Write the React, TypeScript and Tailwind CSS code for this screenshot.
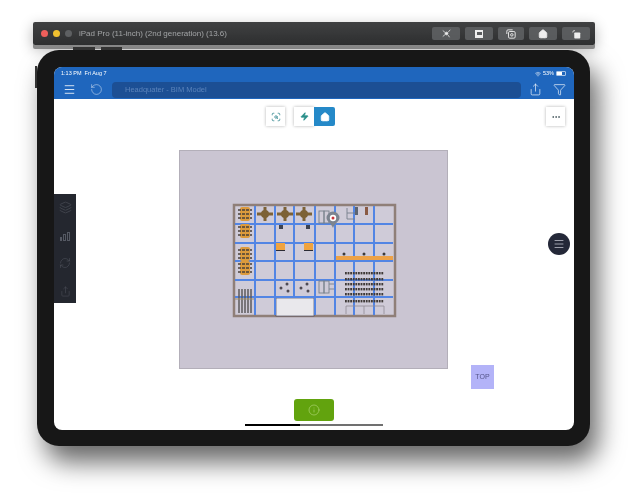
import React from "react";
import {
  Ellipsis,
  Filter,
  Home,
  Info,
  Layers,
  Menu,
  RefreshCw,
  RotateCcw,
  ScanSearch,
  Share,
  Wifi,
  Zap,
} from "lucide-react";

const columns = [255, 275, 294, 315, 335, 354, 374];
const rows = [224, 243, 261, 280, 297];
const stacks = [214, 231, 254, 268];
const fans = [265, 285, 304];
const dotRows = [273, 279, 284, 289, 294, 301];

const dotXs: number[] = [];
for (let x = 346; x <= 384; x += 2.6) dotXs.push(x);

const Shelf = ({ x, y }: { x: number; y: number }) => (
  <g fill="none" stroke="#77808c" strokeWidth="0.9">
    <rect x={x} y={y} width="5" height="12" />
    <rect x={x + 5} y={y} width="5" height="12" />
    <path d={`M${x + 10} ${y + 3}h5M${x + 10} ${y + 8}h5`} />
  </g>
);

const FloorPlan = () => (
  <svg viewBox="180 151 267 217" className="block w-full h-full">
    <rect x="234" y="205" width="161" height="111" fill="#cfcbd8" stroke="#8f7f78" strokeWidth="2.5" />
    <rect x="276" y="298" width="38" height="18" fill="#e9e8ec" stroke="#3c3a52" strokeWidth="0.6" />
    <g stroke="#5285e4" strokeWidth="2">
      {columns.map((x) => (
        <path key={x} d={`M${x} 206V${x > 275 && x < 315 ? 297 : 315}`} />
      ))}
      {rows.map((y) => (
        <path key={y} d={`M235 ${y}H393`} />
      ))}
    </g>
    {stacks.map((y) => (
      <g key={y}>
        <rect x="240" y={y - 7} width="10" height="14" rx="2" fill="#dc9a3c" />
        <path d={`M238 ${y - 4}h14M238 ${y}h14M238 ${y + 4}h14`} stroke="#4a4038" strokeWidth="1.5" strokeDasharray="3 1" />
      </g>
    ))}
    {fans.map((x) => (
      <g key={x} fill="#7d6236">
        <circle cx={x} cy="214" r="4" />
        <path d={`M${x - 8} 212.500h16v3h-16zM${x - 1.500} 207h3v14h-3z`} />
      </g>
    ))}
    <rect x="279" y="225" width="4" height="4" fill="#3d4250" />
    <rect x="306" y="225" width="4" height="4" fill="#3d4250" />
    <rect x="276" y="243" width="9" height="7" fill="#f0a33e" />
    <rect x="304" y="243" width="9" height="7" fill="#f0a33e" />
    <path d="M276 250.500h9M304 250.500h9" stroke="#2b2b35" strokeWidth="1" />
    {[285, 305].map((x) => (
      <g key={x} fill="#4d4852">
        <circle cx={x - 4} cy="288" r="1.500" />
        <circle cx={x + 2} cy="284" r="1.500" />
        <circle cx={x + 3} cy="291" r="1.500" />
      </g>
    ))}
    <g stroke="#5d5a5c" strokeWidth="1.500">
      {[239, 242, 245, 248, 251].map((x) => (
        <path key={x} d={`M${x} 289V313`} />
      ))}
    </g>
    <path d="M235 299H254" stroke="#a08f6f" strokeWidth="1" />
    <Shelf x={319} y={211} />
    <Shelf x={319} y={281} />
    <path d="M347 208v11h8M347 213h8" fill="none" stroke="#77808c" strokeWidth="0.9" />
    <rect x="355" y="207" width="3" height="8" fill="#5d6470" />
    <rect x="365" y="207" width="3" height="8" fill="#8a5a44" />
    <path d="M333 218m-6.500 0a6.500 6.500 0 1 1 13 0c0 3-4.500 5-6.500 10c-2-5-6.500-7-6.500-10z" fill="#7c8490" />
    <circle cx="333" cy="218" r="3.200" fill="#fff" />
    <circle cx="333" cy="218" r="1.500" fill="#c9343b" />
    <rect x="336" y="256" width="57" height="4" fill="#eda247" />
    {[344, 364, 384].map((x) => (
      <circle key={x} cx={x} cy="254" r="1.500" fill="#3c3a3a" />
    ))}
    {dotRows.map((y) => (
      <g key={y} fill="#3f3a38">
        {dotXs.map((x) => (
          <rect key={x} x={x - 1} y={y - 1} width="1.800" height="2.400" />
        ))}
      </g>
    ))}
    <path d="M346 314v-8h38v8M364 306v8" fill="none" stroke="#8f8c96" strokeWidth="0.8" />
  </svg>
);

const ToolbarButton = ({ children, width }: { children: React.ReactNode; width: string }) => (
  <div className={`${width} h-[13px] rounded-[2px] bg-[#5a5c5e] flex items-center justify-center text-[#eeeeee]`}>
    {children}
  </div>
);

export default function App() {
  return (
    <div className="relative w-[628px] h-[495px] overflow-hidden bg-white font-['Liberation_Sans',sans-serif] blur-[0.5px]">
      <div className="relative z-10 ml-[33px] mt-[22px] w-[562px] h-[23px] rounded-[2px] bg-gradient-to-b from-[#3f4041] to-[#2f3031] shadow-[0_4px_0_#8c8c8c,0_4px_14px_rgba(0,0,0,0.3)] flex items-center pl-[8px] pr-[5px]">
        <span className="w-[7px] h-[7px] rounded-full bg-[#ee5f5b]" />
        <span className="ml-[5px] w-[7px] h-[7px] rounded-full bg-[#f0c02f]" />
        <span className="ml-[5px] w-[7px] h-[7px] rounded-full bg-[#5e6062]" />
        <span className="ml-[7px] text-[8px] text-[#a2a4a6] whitespace-nowrap">iPad Pro (11-inch) (2nd generation) (13.6)</span>
        <div className="ml-auto flex gap-[5px]">
          <ToolbarButton width="w-[28px]">
            <svg viewBox="0 0 12 12" className="w-[9px] h-[9px]" stroke="currentColor" strokeWidth="1" fill="currentColor">
              <circle cx="6" cy="6" r="1.800" />
              <path d="M1 2l3 2.500M11 1L8 4.500M1 10l3-2.500M10 11L8 8" />
            </svg>
          </ToolbarButton>
          <ToolbarButton width="w-[28px]">
            <span className="w-[8px] h-[8px] bg-[#eeeeee] flex items-center justify-center">
              <span className="w-[5px] h-[3px] bg-[#5a5c5e]" />
            </span>
          </ToolbarButton>
          <ToolbarButton width="w-[26px]">
            <svg viewBox="0 0 12 12" className="w-[10px] h-[10px]" stroke="currentColor" strokeWidth="1.100" fill="none">
              <path d="M1 6V2.500A1.500 1.500 0 0 1 2.500 1H8" />
              <rect x="3" y="3" width="8" height="8" rx="1.500" />
              <circle cx="7" cy="7" r="1.500" />
            </svg>
          </ToolbarButton>
          <ToolbarButton width="w-[28px]">
            <Home size={10} fill="currentColor" />
          </ToolbarButton>
          <ToolbarButton width="w-[28px]">
            <svg viewBox="0 0 12 12" className="w-[9px] h-[10px]" fill="currentColor">
              <rect x="3" y="4" width="8" height="8" rx="1" />
              <path d="M1 4a2.500 2.500 0 0 1 3-2.500" fill="none" stroke="currentColor" strokeWidth="1" />
            </svg>
          </ToolbarButton>
        </div>
      </div>

      <div className="relative z-20 ml-[37px] mt-[5px] w-[553px] h-[396px] rounded-[22px] bg-[#171717] pl-[17px] pt-[17px] shadow-[8px_16px_26px_rgba(0,0,0,0.6)]">
        <div className="absolute left-[36px] -top-[3px] w-[22px] h-[3px] bg-[#333333]" />
        <div className="absolute left-[64px] -top-[3px] w-[21px] h-[3px] bg-[#333333]" />
        <div className="absolute -left-[2px] top-[16px] w-[2px] h-[22px] bg-[#333333]" />

        <div className="relative w-[520px] h-[363px] rounded-[8px] bg-white overflow-hidden flex flex-col">
          <div className="h-[32px] bg-[#1f66bd] text-white">
            <div className="h-[13px] flex items-center justify-between pl-[7px] pr-[8px] text-[5.5px]">
              <span>1:13 PM&nbsp;&nbsp;Fri Aug 7</span>
              <span className="flex items-center gap-[2px]">
                <Wifi size={6} />
                53%
                <span className="w-[10px] h-[5px] border border-white/60 rounded-[1px]">
                  <span className="block w-[5px] h-full bg-white" />
                </span>
              </span>
            </div>
            <div className="h-[19px] flex items-center">
              <Menu size={13} strokeWidth={1.5} className="ml-[9px]" />
              <RotateCcw size={13} strokeWidth={1} className="ml-[14px] text-white/80" />
              <div className="ml-[9px] w-[409px] h-[16px] rounded-[4px] bg-[#1c4f94] pl-[13px] flex items-center text-[7.5px] text-[#5a83bb]">
                Headquater - BIM Model
              </div>
              <Share size={13} strokeWidth={1.2} className="ml-[8px]" />
              <Filter size={13} strokeWidth={1.2} className="ml-[11px]" />
            </div>
          </div>

          <div className="mt-[8px] flex pl-[212px] pr-[9px]">
            <div className="w-[19px] h-[19px] bg-white shadow-[0_0_3px_rgba(0,0,0,0.3)] flex items-center justify-center text-[#3f8f96]">
              <ScanSearch size={10} />
            </div>
            <div className="ml-[9px] w-[20px] h-[19px] bg-white shadow-[0_0_3px_rgba(0,0,0,0.3)] flex items-center justify-center text-[#2a8f8a]">
              <Zap size={9} fill="currentColor" />
            </div>
            <div className="w-[21px] h-[19px] rounded-r-[2px] bg-[#2589c8] flex items-center justify-center text-white">
              <Home size={10} fill="currentColor" />
            </div>
            <div className="ml-auto w-[19px] h-[19px] bg-white shadow-[0_0_3px_rgba(0,0,0,0.3)] flex items-center justify-center text-[#41535a]">
              <Ellipsis size={10} />
            </div>
          </div>

          <div className="mt-[25px] ml-[126px] w-[267px] h-[217px] bg-[#cac5d2] shadow-[0_0_0_1px_#b3afb9]">
            <FloorPlan />
          </div>

          <div className="mt-[31px] mx-auto w-[40px] h-[22px] rounded-[3px] bg-[#62a30e] flex items-center justify-center text-[#b7db7f]">
            <Info size={12} strokeWidth={1.2} />
          </div>

          {/* overlays on the screen */}
          <div className="absolute left-0 top-[127px] w-[22px] h-[109px] bg-[#24272f] flex flex-col items-center justify-between pt-[7px] pb-[6px] text-[#555963]">
            <Layers size={13} strokeWidth={1} />
            <span className="flex items-end gap-[1px] h-[10px]">
              <span className="w-[2px] h-[4px] border border-[#555963]" />
              <span className="w-[3px] h-[7px] border border-[#555963]" />
              <span className="w-[3px] h-[9px] border border-[#555963]" />
            </span>
            <RefreshCw size={12} strokeWidth={1} />
            <Share size={11} strokeWidth={1} />
          </div>
          <div className="absolute left-[494px] top-[166px] w-[22px] h-[22px] rounded-full bg-[#242838] flex items-center justify-center text-[#c4c6d0]">
            <Menu size={12} strokeWidth={1.5} />
          </div>
          <div className="absolute left-[417px] top-[298px] w-[23px] h-[24px] bg-[#b3b3f8] flex items-center justify-center text-[7px] text-[#55558a]">
            TOP
          </div>
          <div className="absolute left-[191px] top-[357px] w-[138px] h-[1.500px] bg-[#707070]">
            <div className="w-[55px] h-full bg-black" />
          </div>
        </div>
      </div>
    </div>
  );
}
